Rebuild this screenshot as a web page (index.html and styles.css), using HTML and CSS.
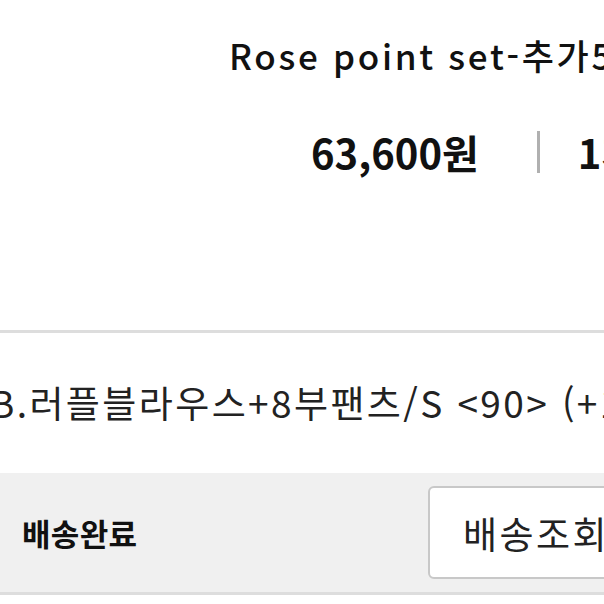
FILE: index.html
```html
<!DOCTYPE html>
<html lang="ko">
  <head>
    <meta charset="UTF-8">
    <meta name="viewport" content="width=device-width, initial-scale=1.0">
    <title>주문상세</title>
    <link rel="stylesheet" href="styles.css">
  </head>
  <body>
    <div class="order-item">
      <div class="item-info">
        <h2 class="item-name">Rose point set-추가5%할인</h2>
        <div class="item-price-row">
          <span class="item-price">63,600원</span>
          <span class="item-divider"></span>
          <span class="item-count">1개</span>
        </div>
      </div>
      <div class="item-option">
        <p>B.러플블라우스+8부팬츠/S &lt;90&gt; (+10,000원)</p>
      </div>
      <div class="item-status">
        <span class="status-label">배송완료</span>
        <button class="track-button">배송조회</button>
      </div>
    </div>
  </body>
</html>
```

FILE: styles.css
```css
body {
  margin: 0;
  padding: 0;
  background-color: #fff;
  font-family: "Noto Sans CJK KR", "Noto Sans", sans-serif;
  color: #111;
  overflow: hidden;
}

.order-item {
  width: 604px;
  height: 604px;
  overflow: hidden;
}

.item-info {
  height: 333px;
  padding-left: 229px;
  padding-top: 30px;
  box-sizing: border-box;
  border-bottom: 3px solid #ddd;
}

.item-name {
  margin: 0;
  font-size: 35px;
  font-weight: 500;
  line-height: 50px;
  letter-spacing: 2.7px;
  white-space: nowrap;
}

.item-price-row {
  display: flex;
  align-items: center;
  margin-top: 46px;
  margin-left: 82px;
  white-space: nowrap;
}

.item-price {
  flex: none;
  font-size: 40px;
  font-weight: 700;
  line-height: 52px;
}

.item-divider {
  flex: none;
  width: 3px;
  height: 42px;
  background-color: #b0b0b0;
  margin: 0 38px 0 58px;
}

.item-count {
  flex: none;
  font-size: 40px;
  font-weight: 700;
  line-height: 52px;
}

.item-option {
  height: 140px;
  padding-top: 44px;
  box-sizing: border-box;
}

.item-option p {
  margin: 0;
  font-size: 37px;
  line-height: 50px;
  letter-spacing: 2.4px;
  color: #222;
  white-space: nowrap;
  text-indent: -10px;
}

.item-status {
  display: flex;
  align-items: center;
  justify-content: space-between;
  height: 119px;
  padding-left: 22px;
  background-color: #f0f0f0;
  border-bottom: 3px solid #ddd;
}

.status-label {
  font-size: 31px;
  font-weight: 700;
  letter-spacing: 0.3px;
}

.track-button {
  flex: none;
  width: 260px;
  height: 93px;
  margin-right: -84px;
  padding: 0 0 0 33px;
  text-align: left;
  background-color: #fff;
  border: 2px solid #c8c8c8;
  border-radius: 6px;
  font-family: "Noto Sans CJK KR", "Noto Sans", sans-serif;
  font-size: 37px;
  letter-spacing: 2.5px;
  color: #222;
  white-space: nowrap;
}
```
